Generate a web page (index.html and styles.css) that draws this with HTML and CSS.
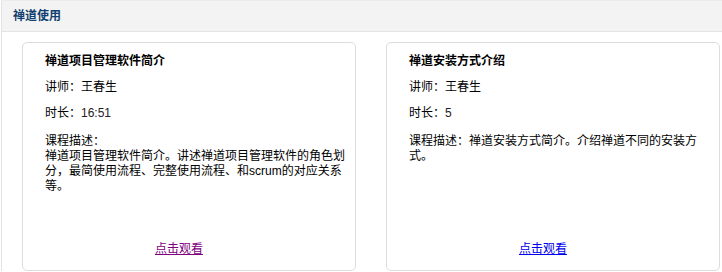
FILE: index.html
```html
<!DOCTYPE html>
<html lang="zh-CN">
<head>
  <meta charset="UTF-8" />
  <title>禅道使用</title>
  <link rel="stylesheet" href="styles.css">
</head>
<body>
  <div class="panel">
    <div class="panel-head">禅道使用</div>

    <div class="panel-body">
      <!-- 课程 1 -->
      <div class="course">
        <p class="course-title">禅道项目管理软件简介</p>
        <p>讲师：王春生</p>
        <p>时长：<span class="num">16:51</span></p>
        <p class="desc">课程描述：<br>禅道项目管理软件简介。讲述禅道项目管理软件的角色划分，最简使用流程、完整使用流程、和scrum的对应关系等。</p>
        <div class="watch"><a class="visited" href="#">点击观看</a></div>
      </div>

      <!-- 课程 2 -->
      <div class="course">
        <p class="course-title">禅道安装方式介绍</p>
        <p>讲师：王春生</p>
        <p>时长：<span class="num">5</span></p>
        <p class="desc">课程描述：禅道安装方式简介。介绍禅道不同的安装方式。</p>
        <div class="watch"><a href="#">点击观看</a></div>
      </div>
    </div>
  </div>
</body>
</html>
```

FILE: styles.css
```css
body {
  margin: 0 0 0 1px;
  font-family: "Liberation Sans", "Noto Sans CJK SC", sans-serif;
  font-size: 12px;
  color: #000;
  background: #fff;
}

.panel {
  border-top: 1px solid #ececec;
  border-left: 1px solid #e2e2e2;
}

.panel-head {
  height: 30px;
  line-height: 30px;
  padding-left: 11px;
  background: #f3f3f3;
  border-bottom: 1px solid #e4e4e4;
  color: #10406f;
  font-weight: bold;
}

.panel-body {
  display: grid;
  grid-template-columns: 334px 334px;
  gap: 30px;
  padding: 10px 0 0 20px;
}

.course {
  height: 229px;
  box-sizing: border-box;
  border: 1px solid #dcdcdc;
  border-radius: 5px;
  padding: 11px 8px 13px 22px;
  display: flex;
  flex-direction: column;
}

.course p {
  margin: 11px 0 0;
  line-height: 15px;
}

.course .course-title {
  margin-top: 0;
  font-weight: bold;
}

.course .desc {
  margin-top: 13px;
}

.num {
  color: #222;
}

.watch {
  margin-top: auto;
  padding-right: 34px;
  text-align: center;
  line-height: 15px;
}

.watch a {
  color: #0000ee;
}

.watch a.visited {
  color: #800080;
}
```
